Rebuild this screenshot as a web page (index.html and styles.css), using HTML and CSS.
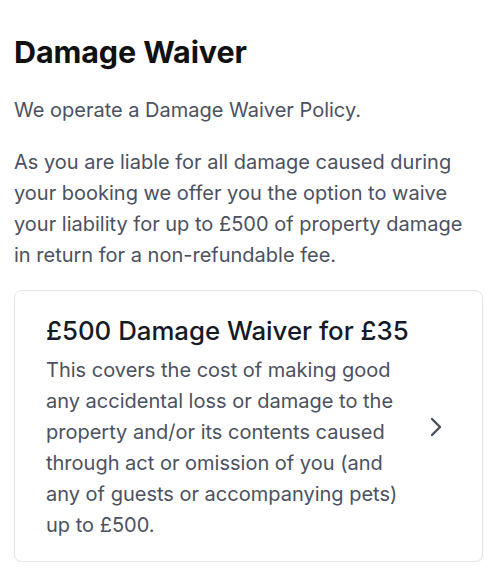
FILE: index.html
```html
<!DOCTYPE html>
<html>
<head>
<meta charset="utf-8">
<link rel="stylesheet" href="styles.css">
</head>
<body>
<main class="page">
  <h1 class="title">Damage Waiver</h1>
  <p class="text">We operate a Damage Waiver Policy.</p>
  <p class="text">As you are liable for all damage caused during your booking we offer you the option to waive your liability for up to £500 of property damage in return for a non-refundable fee.</p>
  <div class="card">
    <div class="card-body">
      <h2 class="card-title">£500 Damage Waiver for £35</h2>
      <p class="card-text">This covers the cost of making good any accidental loss or damage to the property and/or its contents caused through act or omission of you (and any of guests or accompanying pets) up to £500.</p>
    </div>
    <svg class="chevron" width="14" height="22" viewBox="0 0 14 22" fill="none"><path d="M3 3l8 8-8 8" stroke="#4b5058" stroke-width="2.4" stroke-linecap="round" stroke-linejoin="round"/></svg>
  </div>
</main>
</body>
</html>
```

FILE: styles.css
```css
* { box-sizing: border-box; }
body {
  margin: 0;
  background: #fff;
  font-family: Inter, "Noto Sans", sans-serif;
}
.page {
  padding: 31px 14px 0 14px;
}
.title {
  margin: 0;
  font-size: 30.5px;
  font-weight: 700;
  line-height: 42px;
  color: #111;
  letter-spacing: -0.1px;
}
.text {
  margin: 22px 0 0;
  font-size: 20px;
  line-height: 31px;
  color: #4b5160;
}
.text + .text { margin-top: 21px; }
.card {
  margin-top: 19px;
  border: 1px solid #e3e5e8;
  border-radius: 8px;
  box-shadow: 0 1px 2px rgba(0,0,0,0.06);
  padding: 22px 39px 20px 31px;
  display: flex;
  align-items: center;
  gap: 24px;
}
.card-body { flex: 1; min-width: 0; }
.card-title {
  margin: 0;
  font-size: 25.8px;
  font-weight: 500;
  line-height: 36px;
  color: #141a26;
  white-space: nowrap;
}
.card-text {
  margin: 6px 0 0;
  font-size: 20px;
  line-height: 31px;
  color: #4b5160;
}
.chevron { flex: none; }
```
